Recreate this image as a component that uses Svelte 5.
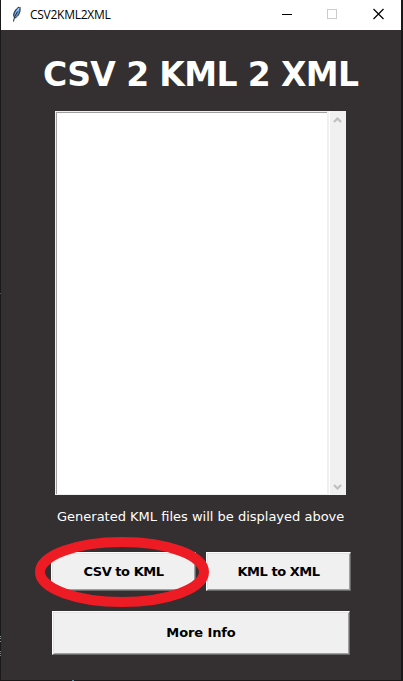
<script>
  let files = $state([]);
</script>

<div class="screen">
  <main class="window">
    <header>
      <svg class="feather" width="12" height="18" viewBox="0 0 12 18">
        <path d="M3 12.5 C1.5 8.5 4 3.5 8.6 2 C9.8 5.5 8 10.8 3.8 13Z" fill="#5b92d0" />
        <path d="M3 13 C4.5 9 6 6 8.2 3" fill="none" stroke="#b9d9f5" stroke-width="1.2" />
        <path d="M2.5 16.5 L3.5 12 L6.5 6.5 M4 13 C8 11 9.6 7 9 2 M2.8 11.5 C2.2 8 4.5 4 8 2" fill="none" stroke="#16202d" stroke-width="1" />
      </svg>
      <span class="caption">CSV2KML2XML</span>
      <svg class="controls" width="120" height="30" viewBox="0 0 120 30" shape-rendering="crispEdges">
        <path d="M1 14.5h10" stroke="#000" />
        <rect x="46.5" y="9.5" width="9" height="9" fill="none" stroke="#ccc" />
        <path d="M92.5 9l10 10M102.5 9l-10 10" stroke="#000" shape-rendering="auto" stroke-width="1.2" />
      </svg>
    </header>

    <h1>CSV 2 KML 2 XML</h1>

    <section class="listbox">
      <div class="list">
        {#each files as file}<div>{file}</div>{/each}
      </div>
      <div class="scroll">
        <svg width="9" height="8" viewBox="0 0 9 8"><path d="M1 6L4.5 2.5L8 6" /></svg>
        <svg width="9" height="8" viewBox="0 0 9 8"><path d="M1 2L4.5 5.5L8 2" /></svg>
      </div>
    </section>

    <p>Generated KML files will be displayed above</p>

    <div class="pair">
      <button class="tight">CSV to KML</button>
      <button class="tight">KML to XML</button>
    </div>
    <button class="more">More Info</button>
  </main>
  <svg class="ring" width="174" height="70" viewBox="0 0 174 70">
    <ellipse cx="87" cy="35" rx="82" ry="30" fill="none" stroke="#ed1c24" stroke-width="10" />
  </svg>
  <svg class="specks" width="80" height="681" viewBox="0 0 80 681" shape-rendering="crispEdges">
    <path d="M0 293h1v1h-1z" fill="#2f5c94" />
    <path d="M0 636h1v1h-1zM0 638h1v1h-1zM0 641h1v1h-1z" fill="#8a8f8f" />
    <path d="M0 651h1v1h-1zM0 653h1v1h-1zM0 655h1v1h-1zM72 680h2v1h-2z" fill="#4b8fa8" />
  </svg>
</div>

<style>
  :global(body) { margin: 0; background: #171717; }
  .screen {
    position: relative;
    box-sizing: border-box;
    width: 403px;
    height: 681px;
    padding: 0 2px 1px 1px;
    background: #191919;
    overflow: hidden;
    font-family: "DejaVu Sans", sans-serif;
  }
  .window {
    height: 680px;
    background: #342f31;
    display: flex;
    flex-direction: column;
    align-items: flex-start;
  }
  header {
    display: flex;
    align-items: center;
    width: 100%;
    height: 30px;
    background: #fff;
    flex: none;
  }
  .feather { margin: 0 7px 0 10px; position: relative; top: -1px; }
  .caption {
    font: 12px/30px "Open Sans", "Noto Sans", sans-serif;
    letter-spacing: -0.27px;
    color: #000;
    flex: 1;
    white-space: nowrap;
  }
  .controls { flex: none; }
  h1 {
    margin: 25px 0 0 42px;
    height: 40px;
    font-size: 33px;
    line-height: 40px;
    font-weight: bold;
    letter-spacing: -0.62px;
    color: #fff;
    white-space: nowrap;
  }
  .listbox {
    display: flex;
    box-sizing: border-box;
    width: 291px;
    height: 384px;
    margin: 16px 0 0 54px;
    background: #f0f0f0;
    flex: none;
  }
  .list {
    box-sizing: border-box;
    width: 274px;
    height: 384px;
    background: #fff;
    border: 1px solid #f0f0f0;
    border-right-width: 2px;
    box-shadow: inset 1px 1px #a0a0a0;
  }
  .scroll {
    width: 17px;
    box-sizing: border-box;
    border-left: 1px solid #fff;
    padding: 5px 0 4px 3px;
    display: flex;
    flex-direction: column;
    justify-content: space-between;
  }
  .scroll path { fill: none; stroke: #bfbfbf; stroke-width: 2.2; }
  p {
    margin: 12px 0 0 56px;
    height: 20px;
    font-size: 13px;
    line-height: 20px;
    color: #fff;
    white-space: nowrap;
  }
  .pair { display: flex; gap: 10px; margin: 25px 0 0 50px; }
  button {
    box-sizing: border-box;
    width: 145px;
    height: 39px;
    padding: 0;
    border: 1px solid;
    border-color: #fff #696969 #696969 #fff;
    border-radius: 0;
    background: #f0f0f0;
    box-shadow: inset 1px 1px #e3e3e3, inset -1px -1px #a0a0a0;
    font: bold 13px/18px "DejaVu Sans", sans-serif;
    color: #000;
    white-space: nowrap;
  }
  .tight { letter-spacing: -0.45px; }
  .more { width: 298px; height: 44px; margin: 20px 0 0 51px; letter-spacing: -0.1px; }
  .ring { position: absolute; left: 35px; top: 537px; }
  .specks { position: absolute; left: 0; top: 0; }
</style>
